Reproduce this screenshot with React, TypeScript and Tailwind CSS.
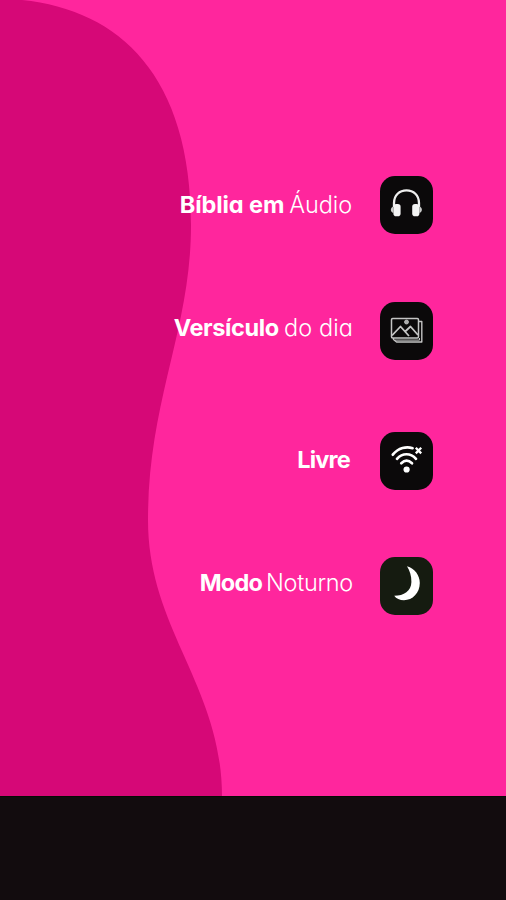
import type { ReactNode } from 'react'
import clsx from 'clsx'

function HeadphonesIcon() {
  return (
    <svg width="53" height="58" viewBox="0 0 53 58" fill="none">
      <path d="M14 31V27C14 19.2 19.5 14.3 26.5 14.3S39 19.2 39 27V31" stroke="#eee" strokeWidth="2.3" />
      <rect x="13.4" y="28" width="7.2" height="12.2" rx="2.8" fill="#f4f4f4" />
      <rect x="32.2" y="28" width="7.2" height="12.2" rx="2.8" fill="#f4f4f4" />
      <path d="M13.5 30.5C10 31.5 10 36 13.5 37ZM39.3 30.5C42.8 31.5 42.8 36 39.3 37Z" fill="#ccc" />
    </svg>
  )
}

function GalleryIcon() {
  return (
    <svg width="53" height="58" viewBox="0 0 53 58" fill="none" stroke="#c4c4c4" strokeWidth="1.5" strokeLinejoin="round">
      <rect x="11.5" y="16.5" width="27" height="19.5" rx="1.2" />
      <path d="M39 19.5H41.8V40H16.5L13.5 37.5V36" strokeWidth="1.4" />
      <path d="M15 38.1H39.5V36" strokeWidth="1" />
      <path d="M12 33.5L20.5 24.5L29 34M25.2 29.5L30.5 24.5L38 33" strokeWidth="1.8" />
      <circle cx="26.5" cy="20" r="2" fill="#aaa" strokeWidth="0.8" />
    </svg>
  )
}

function WifiOffIcon() {
  return (
    <svg width="53" height="58" viewBox="0 0 53 58" fill="none" stroke="#fff" strokeWidth="2.7" strokeLinecap="round">
      <path d="M12.8 22.7C18.5 15.7 26.5 14.2 32.6 16.2" />
      <path d="M17 26.8C22.5 20.7 30.5 20.7 36 26.8" />
      <path d="M21.3 31.2C24.7 27.9 28.5 27.9 32 31.2" />
      <circle cx="26.6" cy="37.5" r="3.1" fill="#fff" stroke="none" />
      <path d="M35.8 15.8L41.2 21.4M41.2 15.8L35.8 21.4" strokeWidth="2.3" strokeLinecap="butt" />
    </svg>
  )
}

function MoonIcon() {
  return (
    <svg width="53" height="58" viewBox="0 0 53 58">
      <path d="M27 9.3C34.8 11.8 39.8 18.2 39.8 26C39.8 36 32.5 43.2 24 43.2C19.8 43.2 16.2 41.8 14.2 38.8C24 38.8 31.2 34 31.4 25C31.5 18.8 29.8 14 27 9.3Z" fill="#fff" />
    </svg>
  )
}

type FeatureProps = {
  bold: string
  light?: string
  boldClass: string
  lightClass?: string
  className: string
  labelClass?: string
  tileClass?: string
  icon: ReactNode
}

function Feature({ bold, light, boldClass, lightClass, className, labelClass = 'h-[58px]', tileClass = 'bg-[#0b090a]', icon }: FeatureProps) {
  return (
    <li className={clsx('flex h-[58px] justify-end', className)}>
      <p className={clsx("flex items-center whitespace-nowrap text-[23.5px] leading-none text-white [font-feature-settings:'cv11','ss03']", labelClass)}>
        <span className={clsx('font-bold', boldClass)}>{bold}</span>
        {light && <span className={clsx('font-light', lightClass)}>{light}</span>}
      </p>
      <div className={clsx('h-[58px] w-[53px] shrink-0 overflow-hidden rounded-[15px]', tileClass)}>{icon}</div>
    </li>
  )
}

function App() {
  return (
    <main className="flex h-[900px] w-[506px] flex-col overflow-hidden bg-[#120c0e] font-['Inter','Open_Sans',sans-serif]">
      <section className="relative h-[796px] overflow-hidden bg-[#ff269d]">
        <svg className="absolute inset-0" width="506" height="796" viewBox="0 0 506 796">
          <path
            d="M0 0H22C120 10 191 76 191 225C191 330 148 400 148 520C148 630 222 685 222 797H0Z"
            fill="#d60877"
          />
        </svg>
        <ul className="relative flex flex-col pt-[176px] pr-[73px]">
          <Feature
            className="gap-[28px]"
            bold="Bíblia em"
            boldClass="tracking-[-0.1px]"
            light="Áudio"
            lightClass="ml-[5px] tracking-[-0.1px]"
            icon={<HeadphonesIcon />}
          />
          <Feature
            className="mt-[68px] gap-[27px]"
            labelClass="h-[52px]"
            bold="Versículo"
            boldClass="tracking-[-0.35px]"
            light="do dia"
            lightClass="ml-[5px] tracking-[0.1px]"
            icon={<GalleryIcon />}
          />
          <Feature
            className="mt-[72px] gap-[30px]"
            labelClass="h-[56px]"
            bold="Livre"
            boldClass="tracking-[-0.8px]"
            icon={<WifiOffIcon />}
          />
          <Feature
            className="mt-[67px] gap-[27px]"
            labelClass="h-[52px]"
            bold="Modo"
            boldClass="tracking-[-0.8px]"
            light="Noturno"
            lightClass="ml-[4px] tracking-[-0.3px]"
            tileClass="bg-[#151b10]"
            icon={<MoonIcon />}
          />
        </ul>
      </section>
      <footer className="h-[104px] border-t border-[#080b04]" />
    </main>
  )
}

export default App
